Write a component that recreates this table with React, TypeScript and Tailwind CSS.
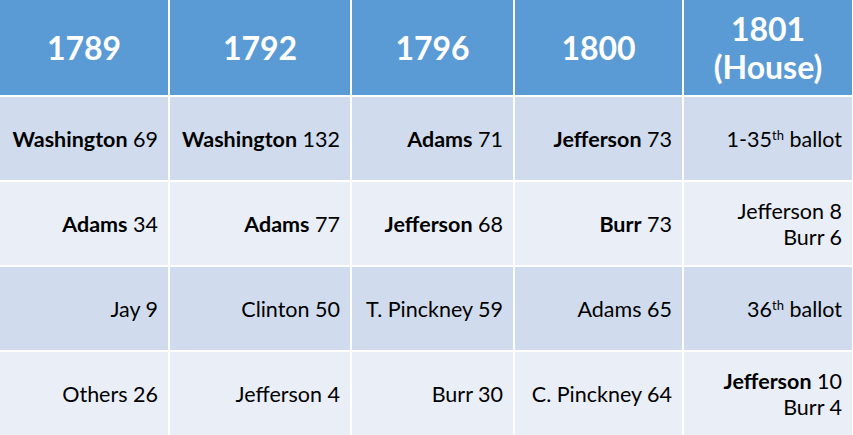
import React from 'react';

type Cell = React.ReactNode;

const years: Cell[] = [
  '1789',
  '1792',
  '1796',
  '1800',
  <>
    1801
    <br />
    (House)
  </>,
];

const B = ({ children }: { children: React.ReactNode }) => (
  <span className="font-bold">{children}</span>
);

const Th = () => <sup className="text-[13px]">th</sup>;

const rows: Cell[][] = [
  [
    <><B>Washington</B> 69</>,
    <><B>Washington</B> 132</>,
    <><B>Adams</B> 71</>,
    <><B>Jefferson</B> 73</>,
    <>1-35<Th /> ballot</>,
  ],
  [
    <><B>Adams</B> 34</>,
    <><B>Adams</B> 77</>,
    <><B>Jefferson</B> 68</>,
    <><B>Burr</B> 73</>,
    <>Jefferson 8<br />Burr 6</>,
  ],
  [
    'Jay 9',
    'Clinton 50',
    'T. Pinckney 59',
    'Adams 65',
    <>36<Th /> ballot</>,
  ],
  [
    'Others 26',
    'Jefferson 4',
    'Burr 30',
    'C. Pinckney 64',
    <><B>Jefferson</B> 10<br />Burr 4</>,
  ],
];

export default function App() {
  return (
    <div className="w-[853px] h-[435px] bg-white overflow-hidden font-['Lato',sans-serif]">
      <div className="grid grid-cols-[168px_180px_161px_167px_168px] grid-rows-[95px_83px_83px_83px_83px] gap-x-[2px] gap-y-[2px]">
        {years.map((y, i) => (
          <div
            key={i}
            className="bg-[#5b9bd5] text-white font-bold text-[32px] leading-[38px] flex items-center justify-center text-center"
          >
            <div>{y}</div>
          </div>
        ))}
        {rows.map((row, r) =>
          row.map((c, i) => (
            <div
              key={`${r}-${i}`}
              className={`${r % 2 === 0 ? 'bg-[#d0dcee]' : 'bg-[#e9eef7]'} text-black text-[21.5px] leading-[26px] flex items-center justify-end text-right pr-[10px]`}
            >
              <div>{c}</div>
            </div>
          ))
        )}
      </div>
    </div>
  );
}
